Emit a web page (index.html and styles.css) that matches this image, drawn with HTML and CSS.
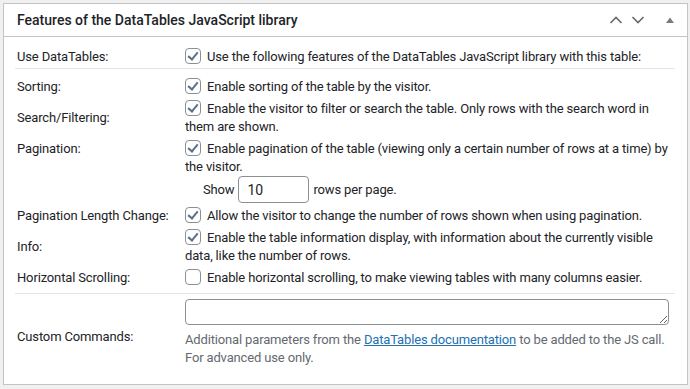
FILE: index.html
```html
<!DOCTYPE html>
<html>
<head>
    <meta charset="UTF-8">
    <title>DataTables features</title>
    <link rel="stylesheet" href="styles.css">
</head>
<body>
    <div class="postbox">
        <div class="postbox-header">
            <h2 class="postbox-title">Features of the DataTables JavaScript library</h2>
            <div class="handle-actions">
                <svg class="handle-icon" width="14" height="10" viewBox="0 0 14 10"><path d="M1.5 8 L7 2.5 L12.5 8" fill="none" stroke="#646970" stroke-width="1.6"/></svg>
                <svg class="handle-icon" width="14" height="10" viewBox="0 0 14 10"><path d="M1.5 2 L7 7.5 L12.5 2" fill="none" stroke="#646970" stroke-width="1.6"/></svg>
                <svg class="handle-icon toggle" width="10" height="10" viewBox="0 0 10 10"><path d="M1 8 L5 2.5 L9 8 Z" fill="#787c82"/></svg>
            </div>
        </div>
        <div class="inside">
            <table class="options">
                <tbody>
                    <tr class="first">
                        <th>Use DataTables:</th>
                        <td><label class="check"><span class="cb on"></span>Use the following features of the DataTables JavaScript library with this table:</label></td>
                    </tr>
                </tbody>
                <tbody>
                    <tr class="first">
                        <th>Sorting:</th>
                        <td><label class="check"><span class="cb on"></span>Enable sorting of the table by the visitor.</label></td>
                    </tr>
                    <tr>
                        <th>Search/Filtering:</th>
                        <td><label class="check"><span class="cb on"></span>Enable the visitor to filter or search the table. Only rows with the search word in them are shown.</label></td>
                    </tr>
                    <tr>
                        <th class="top">Pagination:</th>
                        <td>
                            <label class="check"><span class="cb on"></span>Enable pagination of the table (viewing only a certain number of rows at a time) by the visitor.</label>
                            <div class="show-row">Show <input class="num" type="text" value="10"> rows per page.</div>
                        </td>
                    </tr>
                    <tr>
                        <th>Pagination Length Change:</th>
                        <td><label class="check"><span class="cb on"></span>Allow the visitor to change the number of rows shown when using pagination.</label></td>
                    </tr>
                    <tr>
                        <th>Info:</th>
                        <td><label class="check"><span class="cb on"></span>Enable the table information display, with information about the currently visible data, like the number of rows.</label></td>
                    </tr>
                    <tr class="last">
                        <th>Horizontal Scrolling:</th>
                        <td><label class="check"><span class="cb"></span>Enable horizontal scrolling, to make viewing tables with many columns easier.</label></td>
                    </tr>
                </tbody>
                <tbody>
                    <tr class="custom">
                        <th>Custom Commands:</th>
                        <td>
                            <textarea class="commands" rows="1"></textarea>
                            <p class="description">Additional parameters from the <a href="#">DataTables documentation</a> to be added to the JS call.<br>For advanced use only.</p>
                        </td>
                    </tr>
                </tbody>
            </table>
        </div>
    </div>
</body>
</html>
```

FILE: styles.css
```css
body {
    margin: 0;
    padding: 3px 2px 0 3px;
    background: #f0f0f1;
    font-family: Roboto, "Liberation Sans", sans-serif;
    font-size: 13px;
    letter-spacing: -0.15px;
    color: #1d2327;
}
.postbox {
    background: #fff;
    border: 1px solid #c3c4c7;
    height: 382px;
    box-sizing: border-box;
}
.postbox-header {
    display: flex;
    align-items: center;
    justify-content: space-between;
    height: 32px;
    border-bottom: 1px solid #c3c4c7;
    padding: 0 12px 0 13px;
}
.postbox-title {
    margin: 0;
    font-size: 14px;
    font-weight: 500;
    letter-spacing: 0;
    color: #1d2327;
}
.handle-actions {
    display: flex;
    align-items: center;
    gap: 8px;
}
.handle-icon.toggle {
    margin-left: 12px;
}
.inside {
    padding: 2px 12px 0 11px;
}
.options {
    width: 100%;
    border-collapse: collapse;
}
.options tbody + tbody {
    border-top: 1px solid #e4e4e6;
}
.options th {
    width: 168px;
    text-align: left;
    font-weight: 400;
    vertical-align: middle;
    padding: 2px 0 2px 2px;
    line-height: 18px;
}
.options th.top {
    vertical-align: top;
}
.options td {
    padding: 2px 0;
    vertical-align: top;
    line-height: 18px;
    color: #1d2327;
}
.options tr.first th,
.options tr.first td {
    padding-top: 9px;
}
.options tr.last th,
.options tr.last td {
    padding-bottom: 6px;
}
.options tr.custom th,
.options tr.custom td {
    padding-top: 5px;
}
.options tr.custom td {
    padding-bottom: 10px;
}
.check {
    display: block;
}
.cb {
    display: inline-block;
    width: 16px;
    height: 16px;
    box-sizing: border-box;
    border: 1px solid #8c8f94;
    border-radius: 4px;
    vertical-align: -3px;
    margin-right: 6px;
    position: relative;
}
.cb.on::after {
    content: "";
    position: absolute;
    left: 4px;
    top: 1px;
    width: 4px;
    height: 8px;
    border: solid #5b7088;
    border-width: 0 2px 2px 0;
    transform: rotate(40deg);
}
.show-row {
    display: flex;
    align-items: center;
    gap: 4px;
    height: 27px;
    margin: 0 0 0 18px;
}
.num {
    width: 71px;
    height: 27px;
    box-sizing: border-box;
    border: 1px solid #8c8f94;
    border-radius: 4px;
    padding: 0 8px;
    font-family: inherit;
    font-size: 14px;
    color: #1d2327;
}
.commands {
    display: block;
    width: 484px;
    height: 26px;
    box-sizing: border-box;
    border: 1px solid #8c8f94;
    border-radius: 4px;
    margin: 0;
    resize: vertical;
}
.description {
    margin: 6px 0 0;
    color: #646970;
    line-height: 18px;
}
.description a {
    color: #2271b1;
}
```
